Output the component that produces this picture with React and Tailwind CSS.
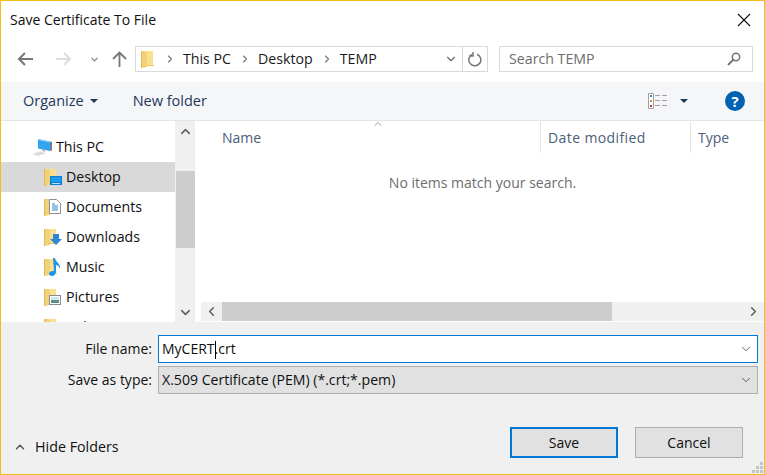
import { ChevronDown, ChevronUp, ChevronLeft, ChevronRight } from 'lucide-react'

function Folder({ className = '' }) {
  return (
    <svg width="13" height="18" viewBox="0 0 13 18" className={className}>
      <path d="M0 1h5l1 1v15l-6 1z" fill="#f0d27a" />
      <path d="M5 1h7v14H6V2z" fill="#fbe08f" />
      <path d="M5 15h8v1H5z" fill="#e8c465" />
      <path d="M0 1h1v17H0z" fill="#e3b94f" />
    </svg>
  )
}

function Overlay({ name }) {
  if (name === 'desktop') {
    return (
      <svg width="12" height="9" viewBox="0 0 12 9" className="absolute left-[6px] top-[8px]">
        <rect width="12" height="9" fill="#0a7fd6" />
        <rect x="1" y="1" width="10" height="5" fill="#1f9bee" />
        <rect x="2" y="7" width="8" height="1" fill="#bfe0f7" />
      </svg>
    )
  }
  if (name === 'documents') {
    return (
      <svg width="12" height="15" viewBox="0 0 12 15" className="absolute left-[5px] top-[1px]">
        <path d="M.5.5h7l4 4v10H.5z" fill="#fff" stroke="#8d8d8d" />
        <path d="M3 5h3M3 7h6M3 9h6M3 11h6" stroke="#2a85cc" />
      </svg>
    )
  }
  if (name === 'downloads') {
    return (
      <svg width="12" height="11" viewBox="0 0 12 11" className="absolute left-[6px] top-[6px]">
        <path d="M3 0h6v5h3l-6 6-6-6h3z" fill="#2f86d6" />
      </svg>
    )
  }
  if (name === 'music') {
    return (
      <svg width="12" height="18" viewBox="0 0 12 18" className="absolute left-[5px] top-0">
        <path d="M4 0h2c0 4 6 5 5 11-.5-2-2-4-4-4v7c0 2-2 4-4 4s-3-1-3-2.500S2 12.500 5 13z" fill="#1b96ee" />
      </svg>
    )
  }
  return (
    <svg width="12" height="10" viewBox="0 0 12 10" className="absolute left-[5px] top-[7px]">
      <rect x=".5" y=".5" width="11" height="9" fill="#fff" stroke="#8d8d8d" />
      <rect x="2" y="2" width="8" height="3" fill="#cfe4f5" />
      <rect x="2" y="5" width="8" height="3" fill="#5f8f80" />
    </svg>
  )
}

function NavItem({ label, icon, active }) {
  return (
    <div className={`flex h-[30px] shrink-0 items-center pl-[43px] ${active ? 'bg-[#d9d9d9]' : ''}`}>
      <div className="relative mr-[4px] h-[18px] w-[18px]">
        <Folder />
        <Overlay name={icon} />
      </div>
      <span className="text-[14.2px] text-[#0f0f0f]">{label}</span>
    </div>
  )
}

function Arrow({ flip, color }) {
  return (
    <svg width="16" height="14" viewBox="0 0 16 14" className={flip ? 'rotate-180' : ''}>
      <path d="M16 7H2M8 1 2 7l6 6" fill="none" stroke={color} strokeWidth="2" />
    </svg>
  )
}

function Crumb({ label, gap = 'mr-[7px]' }) {
  return (
    <>
      <ChevronRight size={12} strokeWidth={2.3} className="text-[#767676]" />
      <span className={`ml-[7px] text-[#1a1a1a] ${gap}`}>{label}</span>
    </>
  )
}

export default function App() {
  return (
    <div className="flex h-[475px] w-[765px] flex-col overflow-hidden border border-[#f6bd16] bg-white font-['Open_Sans',sans-serif] text-[14px] leading-5">
      <div className="flex h-[37px] shrink-0 items-center justify-between pl-[9px] pr-[13px]">
        <span className="text-[#101010]">Save Certificate To File</span>
        <svg width="14" height="14" viewBox="0 0 14 14">
          <path d="M1 1l12 12M13 1 1 13" stroke="#111" strokeWidth="1.1" />
        </svg>
      </div>

      <div className="flex h-[44px] shrink-0 items-start pt-[8px]">
        <div className="flex h-[26px] w-[134px] shrink-0 items-center pl-[16px]">
          <Arrow color="#767676" />
          <div className="ml-[23px]"><Arrow flip color="#dcdcdc" /></div>
          <ChevronDown size={11} strokeWidth={2.5} className="ml-[17px] text-[#7d7d7d]" />
          <svg width="15" height="16" viewBox="0 0 15 16" className="ml-[12px]">
            <path d="M7.500 16V1.500M1 8l6.500-6.500L14 8" fill="none" stroke="#767676" strokeWidth="1.800" />
          </svg>
        </div>
        <div className="flex h-[26px] w-[353px] shrink-0 items-center border border-[#d9d9d9]">
          <Folder className="ml-[5px]" />
          <div className="ml-[10px] flex flex-1 items-center text-[14.2px]">
            <Crumb label="This PC" gap="mr-[8px]" />
            <Crumb label="Desktop" gap="mr-[8px]" />
            <Crumb label="TEMP" />
          </div>
          <ChevronDown size={14} strokeWidth={2} className="mr-[4px] text-[#6d6d6d]" />
          <div className="flex h-full w-[25px] items-center justify-center border-l border-[#d9d9d9]">
            <svg width="15" height="15" viewBox="0 0 15 15">
              <path d="M9 2.200A6 6 0 1 1 4 2.500M5 0v4H1" fill="none" stroke="#767676" strokeWidth="1.500" />
            </svg>
          </div>
        </div>
        <div className="ml-[11px] flex h-[26px] w-[254px] shrink-0 items-center justify-between border border-[#d9d9d9] pl-[9px] pr-[11px]">
          <span className="text-[14.2px] text-[#6d6d6d]">Search TEMP</span>
          <svg width="14" height="14" viewBox="0 0 14 14">
            <circle cx="9" cy="5" r="3.700" fill="none" stroke="#767676" strokeWidth="1.500" />
            <path d="M6.500 7.500 1 13" stroke="#767676" strokeWidth="2" />
          </svg>
        </div>
      </div>

      <div className="flex h-[39px] shrink-0 items-center border-b border-[#e5e5e5] bg-[#f5f6f7] pl-[22px] pr-[19px] text-[14.5px] text-[#1e395b]">
        <span>Organize</span>
        <svg width="8" height="4" viewBox="0 0 8 4" className="ml-[6px]"><path d="M0 0h8L4 4z" fill="#1e395b" /></svg>
        <span className="ml-[35px]">New folder</span>
        <div className="ml-auto flex items-center">
          <svg width="19" height="16" viewBox="0 0 19 16">
            <path d="M.5.500h5v15h-5z" fill="#fff" stroke="#a0a0a0" />
            <path d="M2 2h2v2H2z" fill="#3f87c5" />
            <path d="M2 7h2v2H2z" fill="#c9913d" />
            <path d="M2 12h2v2H2z" fill="#c0392b" />
            <path d="M7 2.500h5M14 2.500h5M7 7.500h5M14 7.500h5M7 12.500h5M14 12.500h5" stroke="#a0a0a0" />
          </svg>
          <svg width="8" height="4" viewBox="0 0 8 4" className="ml-[13px]"><path d="M0 0h8L4 4z" fill="#1e395b" /></svg>
          <div className="ml-[37px] flex h-[20px] w-[20px] items-center justify-center rounded-full bg-[#0063b1] text-[15px] font-bold text-white">?</div>
        </div>
      </div>

      <div className="flex h-[201px] shrink-0">
        <div className="flex w-[174px] shrink-0 flex-col overflow-hidden pt-[11px]">
          <div className="flex h-[30px] shrink-0 items-center pl-[30px]">
            <svg width="22" height="19" viewBox="0 0 22 19" className="mr-[3px]">
              <path d="M7 1l12 2.500V13L7 10.500z" fill="#35a4f0" />
              <path d="M7 1l12 2.500v1L7 2z" fill="#8fd0f8" />
              <path d="M19 3.500V13l2-.5V4z" fill="#6f7f8c" />
              <path d="M11 11l3 .7v2L11 13z" fill="#b5b5b5" />
              <path d="M1 16l8-2.500 6 1.500-8 3z" fill="#dcdcdc" />
            </svg>
            <span className="text-[14.2px] text-[#0f0f0f]">This PC</span>
          </div>
          <NavItem label="Desktop" icon="desktop" active />
          <NavItem label="Documents" icon="documents" />
          <NavItem label="Downloads" icon="downloads" />
          <NavItem label="Music" icon="music" />
          <NavItem label="Pictures" icon="pictures" />
          <NavItem label="Videos" icon="pictures" />
        </div>
        <div className="flex w-[20px] shrink-0 flex-col bg-[#f0f0f0] pl-[1px]">
          <div className="flex h-[50px] items-start justify-center pt-[3px]">
            <ChevronUp size={15} strokeWidth={2.5} className="text-[#606060]" />
          </div>
          <div className="h-[77px] bg-[#cdcdcd]" />
          <div className="mt-auto flex h-[20px] items-center justify-center">
            <ChevronDown size={15} strokeWidth={2.5} className="text-[#606060]" />
          </div>
        </div>
        <div className="ml-[6px] flex min-w-0 flex-1 flex-col">
          <div className="relative flex h-[32px] shrink-0 pt-[1px] text-[#4c607a]">
            <ChevronUp size={12} strokeWidth={1.5} className="absolute left-[171px] top-[-3px] text-[#777]" />
            <div className="flex w-[340px] items-center border-r border-[#e5e5e5] pl-[21px]">Name</div>
            <div className="flex w-[150px] items-center border-r border-[#e5e5e5] pl-[7px] tracking-[0.4px]">Date modified</div>
            <div className="flex flex-1 items-center pl-[7px]">Type</div>
          </div>
          <div className="flex flex-1 justify-center pt-[20px] text-[#6d6d6d]">No items match your search.</div>
          <div className="mb-[1px] flex h-[19px] shrink-0 items-center bg-[#f0f0f0]">
            <div className="flex w-[21px] justify-center">
              <ChevronLeft size={15} strokeWidth={2.5} className="text-[#606060]" />
            </div>
            <div className="h-full w-[390px] bg-[#cdcdcd]" />
            <div className="ml-auto flex w-[21px] justify-center">
              <ChevronRight size={15} strokeWidth={2.5} className="text-[#606060]" />
            </div>
          </div>
        </div>
      </div>

      <div className="relative flex min-h-0 flex-1 flex-col bg-[#f0f0f0] pb-[16px] pt-[13px]">
        <div className="grid grid-cols-[151px_600px] items-center gap-x-[6px] gap-y-[3px]">
          <span className="text-right text-[#101010]">File name:</span>
          <div className="flex h-[28px] items-center justify-between border border-[#0078d7] bg-white pl-[3px] pr-[4px]">
            <span className="text-[#101010]">MyCERT<span className="inline-block h-[18px] w-px -mr-px align-middle bg-black" />.crt</span>
            <ChevronDown size={14} strokeWidth={1.4} className="text-[#404040]" />
          </div>
          <span className="text-right text-[#101010]">Save as type:</span>
          <div className="flex h-[28px] items-center justify-between border border-[#adadad] bg-[#e1e1e1] pl-[3px] pr-[4px]">
            <span className="text-[14.1px] text-[#101010]">X.509 Certificate (PEM) (*.crt;*.pem)</span>
            <ChevronDown size={14} strokeWidth={1.4} className="text-[#404040]" />
          </div>
        </div>
        <div className="mt-auto flex items-center pl-[12px] pr-[21px]">
          <ChevronUp size={14} strokeWidth={2.5} className="mt-[8px] text-[#555]" />
          <span className="ml-[8px] mt-[8px] text-[14.3px] text-[#101010]">Hide Folders</span>
          <button className="ml-auto h-[31px] w-[108px] border-2 border-[#0078d7] bg-[#e1e1e1] text-[#101010]">Save</button>
          <button className="ml-[17px] h-[31px] w-[108px] border border-[#adadad] bg-[#e1e1e1] text-[#101010]">Cancel</button>
        </div>
        <svg width="12" height="12" viewBox="0 0 12 12" className="absolute bottom-0 right-0">
          <path d="M8 0h3v3H8zM4 4h3v3H4zM8 4h3v3H8zM0 8h3v3H0zM4 8h3v3H4zM8 8h3v3H8z" fill="#c4c4c4" />
        </svg>
      </div>
    </div>
  )
}
